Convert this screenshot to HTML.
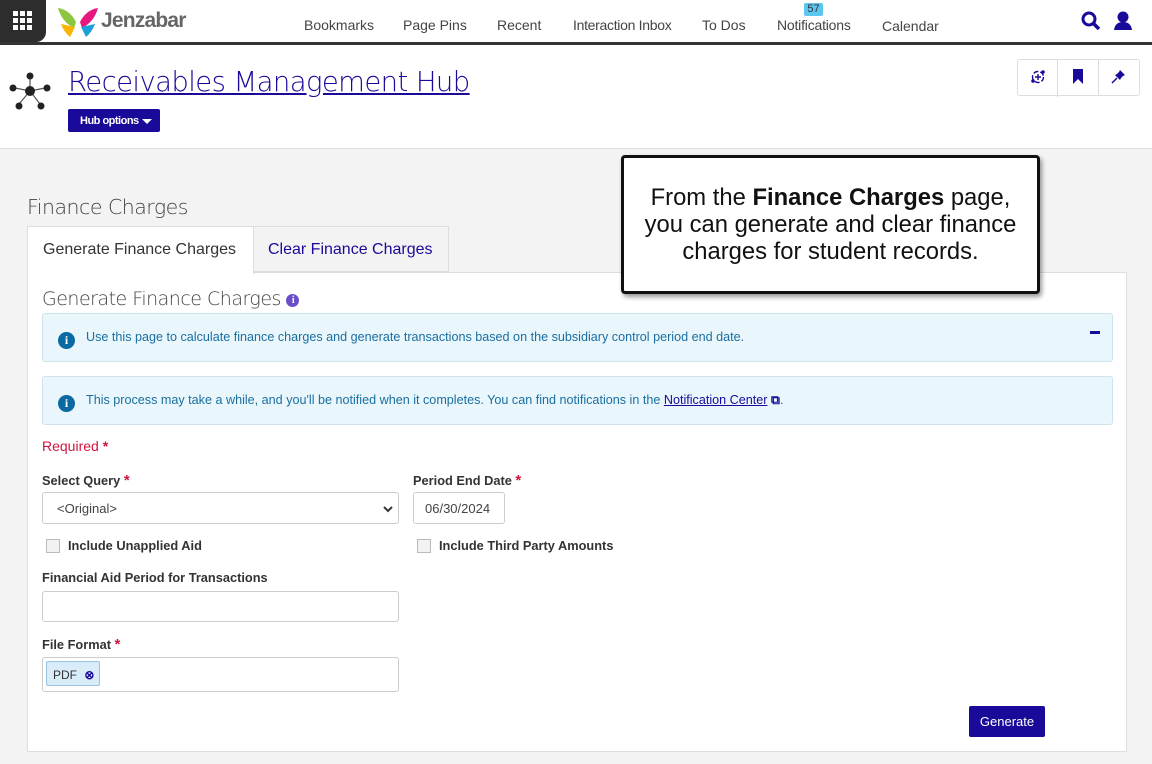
<!DOCTYPE html>
<html><head><style>
*{box-sizing:border-box;margin:0;padding:0}
body{width:1152px;height:764px;overflow:hidden;background:#f3f3f3;font-family:"Liberation Sans",Arial,sans-serif;position:relative;color:#333}
.top{position:absolute;left:0;top:0;width:1152px;height:45px;background:#fff;border-bottom:3px solid #333}
.tile{position:absolute;left:0;top:0;width:46px;height:42px;background:#2d2d2d;border-bottom-right-radius:10px}
.nav{position:absolute;top:17px;font-size:14px;color:#444}
.hdr{position:absolute;left:0;top:45px;width:1152px;height:104px;background:#fff;border-bottom:1px solid #ddd}
.abs{position:absolute}
.lbl{position:absolute;font-size:12.8px;font-weight:bold;color:#333}
.star{color:#d0143c;font-weight:bold}
.inp{position:absolute;background:#fff;border:1px solid #ccc;border-radius:3px}
.cb{position:absolute;width:14px;height:14px;border:1px solid #bbb;background:#f2f2f2}
.info{position:absolute;left:42px;width:1071px;background:#e9f6fc;border:1px solid #cfe3ec;border-radius:3px;font-size:12.6px;color:#1a6fa0}
.ic{position:absolute;width:17px;height:17px;border-radius:50%;background:#0b6aa2;color:#fff;font:bold 12px "Liberation Serif",serif;text-align:center;line-height:17px}
</style></head><body>
<div class="top">
 <div class="tile"><svg class="abs" style="left:13px;top:11px" width="19" height="19"><g fill="#fff"><rect x="0" y="0" width="5" height="5"/><rect x="7" y="0" width="5" height="5"/><rect x="14" y="0" width="5" height="5"/><rect x="0" y="7" width="5" height="5"/><rect x="7" y="7" width="5" height="5"/><rect x="14" y="7" width="5" height="5"/><rect x="0" y="14" width="5" height="5"/><rect x="7" y="14" width="5" height="5"/><rect x="14" y="14" width="5" height="5"/></g></svg></div>
 <svg class="abs" style="left:56px;top:6px" width="44" height="32"><path d="M2 2 Q14 4 20 16 L18 22 Q6 16 2 2Z" fill="#8cc63f"/><path d="M42 2 Q30 4 24 16 L26 22 Q38 16 42 2Z" fill="#e6177e"/><path d="M5 18 L19 21 L14 31 Q8 26 5 18Z" fill="#f7b500"/><path d="M39 18 L25 21 L30 31 Q36 26 39 18Z" fill="#1ba0d8"/></svg>
 <div class="abs" style="left:101px;top:9px;font-size:21px;color:#666;font-weight:bold;letter-spacing:-0.8px">Jenzabar</div>
 <div class="nav" style="left:304px">Bookmarks</div>
 <div class="nav" style="left:403px">Page Pins</div>
 <div class="nav" style="left:497px">Recent</div>
 <div class="nav" style="left:573px;letter-spacing:-0.3px">Interaction Inbox</div>
 <div class="nav" style="left:702px">To Dos</div>
 <div class="nav" style="left:777px;letter-spacing:-0.2px">Notifications</div>
 <div class="abs" style="left:804px;top:3px;width:19px;height:13px;background:#5bc6f0;border-radius:2px;font-size:11px;text-align:center;line-height:13px;color:#333">57</div>
 <div class="nav" style="left:882px;top:18px">Calendar</div>
 <svg class="abs" style="left:1081px;top:11px" width="20" height="20"><circle cx="8" cy="8" r="6" fill="none" stroke="#1a0a99" stroke-width="3"/><path d="M12 12 L18 18" stroke="#1a0a99" stroke-width="3.5"/></svg>
 <svg class="abs" style="left:1113px;top:11px" width="20" height="19"><circle cx="10" cy="6" r="5.5" fill="#1a0a99"/><path d="M1 19 Q2 11 10 11 Q18 11 19 19Z" fill="#1a0a99"/></svg>
</div>
<div class="hdr">
 <svg class="abs" style="left:8px;top:27px" width="44" height="40"><g stroke="#555" stroke-width="1.2"><path d="M22 19 L22 4 M22 19 L7 16 M22 19 L37 16 M22 19 L11 32 M22 19 L32 32"/></g><g fill="#222"><circle cx="22" cy="19" r="5"/><circle cx="22" cy="4" r="3.5"/><circle cx="5" cy="16" r="3.5"/><circle cx="39" cy="16" r="3.5"/><circle cx="11" cy="34" r="3.5"/><circle cx="33" cy="34" r="3.5"/></g></svg>
 <div class="abs" style="left:68px;top:21px;font-size:27.5px;color:#1a0a99;text-decoration:underline;font-family:'DejaVu Sans',sans-serif;font-weight:200;letter-spacing:-0.6px">Receivables Management Hub</div>
 <div class="abs" style="left:68px;top:64px;width:92px;height:23px;background:#1a0a99;border-radius:2px;color:#fff;font-size:11px;font-weight:bold;line-height:24px;padding-left:12px;white-space:nowrap;letter-spacing:-0.5px">Hub options</div>
 <div class="abs" style="left:142px;top:74px;width:0;height:0;border-left:5px solid transparent;border-right:5px solid transparent;border-top:5px solid #fff"></div>
 <div class="abs" style="left:1017px;top:14px;width:123px;height:37px;border:1px solid #ddd;border-radius:3px;background:#fff"></div>
 <div class="abs" style="left:1057px;top:14px;width:1px;height:38px;background:#ddd"></div>
 <div class="abs" style="left:1098px;top:14px;width:1px;height:37px;background:#ddd"></div>
 <svg class="abs" style="left:1030px;top:24px" width="16" height="16"><circle cx="8" cy="8" r="5.5" fill="none" stroke="#1a0a99" stroke-width="1.4" stroke-dasharray="5 2"/><path d="M8 5v6M5 8h6" stroke="#1a0a99" stroke-width="1.4"/><circle cx="3" cy="12" r="1.8" fill="#1a0a99"/><circle cx="13" cy="3" r="1.8" fill="#1a0a99"/></svg>
 <svg class="abs" style="left:1072px;top:24px" width="12" height="15"><path d="M1 0H11V15L6 10L1 15Z" fill="#1a0a99"/></svg>
 <svg class="abs" style="left:1111px;top:24px" width="15" height="15"><path d="M9 1L14 6L12 7L10 9L9 11L4 6L6 5L8 3Z" fill="#1a0a99"/><path d="M6 9L1 14" stroke="#1a0a99" stroke-width="1.5"/></svg>
</div>
<div class="abs" style="left:27px;top:195px;font-size:20.5px;color:#444;font-family:'DejaVu Sans',sans-serif;font-weight:200;letter-spacing:-0.5px">Finance Charges</div>
<div class="abs" style="left:27px;top:272px;width:1100px;height:480px;background:#fff;border:1px solid #ddd"></div>
<div class="abs" style="left:27px;top:226px;width:227px;height:48px;background:#fff;border:1px solid #ddd;border-bottom:none;font-size:16px;color:#333;padding:14px 0 0 15px">Generate Finance Charges</div>
<div class="abs" style="left:253px;top:226px;width:196px;height:46px;background:#f3f3f3;border:1px solid #ddd;font-size:16px;color:#1a0a99;padding:14px 0 0 14px">Clear Finance Charges</div>
<div class="abs" style="left:42px;top:288px;font-size:19px;color:#444;font-family:'DejaVu Sans',sans-serif;font-weight:200;letter-spacing:-0.5px">Generate Finance Charges <span style="display:inline-block;width:13px;height:13px;border-radius:50%;background:#6a4fc8;color:#fff;font:bold 10px 'Liberation Serif',serif;text-align:center;line-height:13px;vertical-align:2px">i</span></div>
<div class="info" style="top:313px;height:49px"><div class="ic" style="left:15px;top:18px">i</div><div class="abs" style="left:43px;top:16px">Use this page to calculate finance charges and generate transactions based on the subsidiary control period end date.</div><div class="abs" style="left:1047px;top:17px;width:10px;height:3px;background:#1a0a99"></div></div>
<div class="info" style="top:376px;height:49px"><div class="ic" style="left:15px;top:18px">i</div><div class="abs" style="left:43px;top:16px">This process may take a while, and you'll be notified when it completes. You can find notifications in the <span style="color:#1a0a99;text-decoration:underline">Notification Center</span> <span style="color:#1a0a99;font-weight:bold">⧉</span>.</div></div>
<div class="abs" style="left:42px;top:438px;font-size:14px;color:#d0143c">Required <span class="star">*</span></div>
<div class="lbl" style="left:42px;top:472px">Select Query <span class="star" style="font-size:15px">*</span></div>
<div class="inp" style="left:42px;top:492px;width:357px;height:32px;font-size:13px;color:#444;padding:8px 14px">&lt;Original&gt;<svg class="abs" style="right:5px;top:13px" width="10" height="7"><path d="M1 1L5 5L9 1" stroke="#333" stroke-width="2" fill="none"/></svg></div>
<div class="lbl" style="left:413px;top:472px">Period End Date <span class="star" style="font-size:15px">*</span></div>
<div class="inp" style="left:413px;top:492px;width:92px;height:32px;font-size:13px;color:#444;padding:8px 11px">06/30/2024</div>
<div class="cb" style="left:46px;top:539px"></div><div class="lbl" style="left:68px;top:538px">Include Unapplied Aid</div>
<div class="cb" style="left:417px;top:539px"></div><div class="lbl" style="left:439px;top:538px">Include Third Party Amounts</div>
<div class="lbl" style="left:42px;top:570px">Financial Aid Period for Transactions</div>
<div class="inp" style="left:42px;top:591px;width:357px;height:31px"></div>
<div class="lbl" style="left:42px;top:636px">File Format <span class="star" style="font-size:15px">*</span></div>
<div class="inp" style="left:42px;top:657px;width:357px;height:35px"><div class="abs" style="left:3px;top:3px;width:54px;height:25px;background:#d9ecfa;border:1px solid #9cc3de;border-radius:2px;font-size:12px;color:#333;padding:6px 0 0 6px">PDF <span style="color:#1a0a99;font-weight:bold;margin-left:4px">⊗</span></div></div>
<div class="abs" style="left:969px;top:706px;width:76px;height:31px;background:#1a0a99;border-radius:2px;color:#fff;font-size:13px;text-align:center;line-height:31px">Generate</div>
<div class="abs" style="left:621px;top:155px;width:419px;height:139px;background:#fff;border:3px solid #111;border-radius:4px;box-shadow:2px 3px 5px rgba(0,0,0,.4);font-size:23.8px;color:#111;text-align:center;line-height:27px;padding-top:26px">From the <b>Finance Charges</b> page,<br>you can generate and clear finance<br>charges for student records.</div>
</body></html>
